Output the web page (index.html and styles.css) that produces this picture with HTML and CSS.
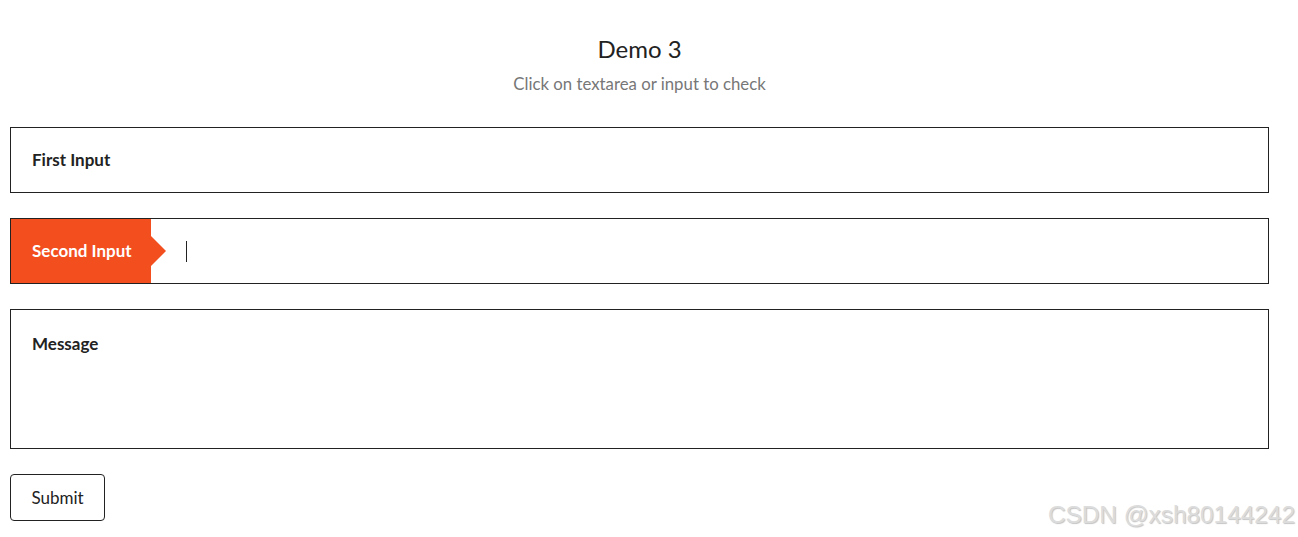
FILE: index.html
```html
<!DOCTYPE html>
<html>
<head>
<meta charset="utf-8">
<link rel="stylesheet" href="styles.css">
</head>
<body>
<div class="page">
  <header class="head">
    <h1 class="title">Demo 3</h1>
    <p class="sub">Click on textarea or input to check</p>
  </header>
  <form class="form">
    <div class="field">
      <span class="label">First Input</span>
    </div>
    <div class="field active">
      <span class="label">Second Input</span>
      <span class="caret"></span>
    </div>
    <div class="field area">
      <span class="label">Message</span>
    </div>
    <button type="button" class="btn">Submit</button>
  </form>
</div>
<div class="mark">CSDN @xsh80144242</div>
</body>
</html>
```
FILE: styles.css
```css
html, body { margin: 0; padding: 0; background: #fff; }
body { font-family: Lato, "Open Sans", sans-serif; color: #222; }
.page { width: 1259px; padding: 0 0 0 10px; }
.head { text-align: center; padding-top: 34px; }
.title { margin: 0; font-size: 24px; font-weight: 400; line-height: 30px; color: #222; }
.sub { margin: 9px 0 0; font-size: 16.8px; line-height: 22px; color: #777; }
.form { margin-top: 32px; display: flex; flex-direction: column; align-items: flex-start; }
.field { width: 1259px; height: 66px; box-sizing: border-box; border: 1px solid #222; display: flex; align-items: center; margin-bottom: 25px; }
.label { font-size: 17px; font-weight: 700; color: #222; padding: 0 0 2px 21px; height: 100%; display: flex; align-items: center; box-sizing: border-box; white-space: nowrap; }
.active .label { background: #f24e1e; color: #fff; position: relative; width: 140px; flex: none; }
.active .label::after { content: ""; position: absolute; left: 100%; top: 50%; margin-top: -15px; border-top: 15px solid transparent; border-bottom: 15px solid transparent; border-left: 15px solid #f24e1e; }
.caret { display: block; width: 1px; height: 21px; background: #222; margin-left: 35px; }
.area { height: 140px; align-items: flex-start; }
.area .label { height: auto; padding-top: 23px; padding-bottom: 0; }
.btn { font-family: Lato, sans-serif; font-size: 17px; color: #222; background: #fff; border: 1px solid #222; border-radius: 4px; width: 95px; height: 47px; padding: 0; cursor: pointer; margin-top: 0; }
.mark { position: absolute; right: 3px; top: 501px; font-family: "Liberation Sans", Arial, sans-serif; font-size: 24.4px; color: #dcdcdc; text-shadow: 1px 1px 1px #c4c4c4; letter-spacing: 0; }
```
